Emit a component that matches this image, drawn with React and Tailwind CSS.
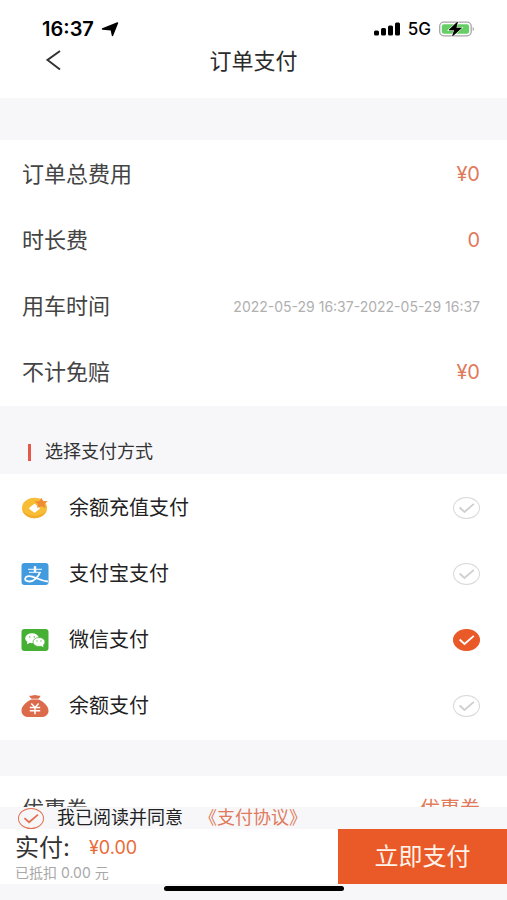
import { useState } from 'react';

const charges = [
  { label: '订单总费用', value: '¥0' },
  { label: '时长费', value: '0' },
  { label: '用车时间', value: '2022-05-29 16:37-2022-05-29 16:37', muted: true },
  { label: '不计免赔', value: '¥0' },
];

function CoinIcon() {
  return (
    <svg viewBox="0 0 28 24" className="h-6 w-7" aria-hidden="true">
      <ellipse cx="13.5" cy="12" rx="12.5" ry="10.2" fill="#f8bd35" />
      <path d="M1.200 13.500c1 5 6.300 8.700 12.300 8.700s11.300-3.700 12.300-8.700c-2.500 4-7 6.200-12.300 6.200S3.700 17.500 1.200 13.500z" fill="#f3ab2b" />
      <path d="M13.500 8.600l4.600 3.700-4.600 3.700-4.600-3.700z" fill="#fff" stroke="#fff" strokeWidth="1.500" strokeLinejoin="round" />
      <path d="M20.300 1.800l1.800 3.100 4.700.300-3.300 2.800 1.200 4-4.400-1.700-4.200 1.600.9-3.800-3.500-2.500 4.900-.600z" fill="#ef8b35" />
    </svg>
  );
}

function AlipayIcon() {
  return (
    <svg viewBox="0 0 28 24" className="h-6 w-7" aria-hidden="true">
      <rect x="0.500" y="1" width="27" height="22" rx="3" fill="#429bdf" />
      <path d="M7 7.300h14M8 10.300h12" stroke="#d5eafa" strokeWidth="1.300" fill="none" />
      <path d="M14 4.200v6" stroke="#fff" strokeWidth="2.400" fill="none" />
      <path d="M19 10.300c-1.400 4-5.500 9.200-10.600 9.200-3.300 0-4.600-1.500-4.200-3.100.5-1.900 3.300-2.700 6.400-1.900 4.300 1 8.900 4.300 16.300 5" stroke="#fff" strokeWidth="1.800" fill="none" />
    </svg>
  );
}

function WechatIcon() {
  return (
    <svg viewBox="0 0 28 24" className="h-6 w-7" aria-hidden="true">
      <rect x="0.500" y="1" width="27" height="22" rx="3" fill="#46b035" />
      <ellipse cx="11" cy="10.300" rx="6.800" ry="5" fill="#fff" />
      <path d="M6.500 13l-.6 3.200 3.600-1.600z" fill="#fff" />
      <ellipse cx="18" cy="14" rx="6" ry="4.500" fill="#fff" stroke="#46b035" strokeWidth="0.700" />
      <path d="M19.500 17.500l3 1.800-.6-3z" fill="#fff" />
      <g fill="#46b035">
        <circle cx="8.800" cy="8.900" r="0.700" />
        <circle cx="13.300" cy="8.900" r="0.700" />
        <circle cx="16" cy="12.900" r="0.600" />
        <circle cx="20" cy="12.900" r="0.600" />
      </g>
    </svg>
  );
}

function MoneyBagIcon() {
  return (
    <svg viewBox="0 0 28 24" className="h-6 w-7" aria-hidden="true">
      <path d="M8.200 1.700c2 .5 3.500-.700 5.800-.700s3.800 1.200 5.400.700c-.2 1.600-1.200 2.300-2.200 3h-6.400c-1.100-.7-2.200-1.500-2.600-3z" fill="#dc6b4c" />
      <path d="M10.500 5.600h7c4.500 1.800 10 6.200 10 11.200 0 4.200-3.300 6.300-7.500 6.300H8c-4.200 0-7.500-2.100-7.500-6.300 0-5 5.500-9.400 10-11.200z" fill="#dc6b4c" />
      <path d="M10.300 9.500l3.700 4 3.700-4M8.800 13.600h10.400M8.800 16.800h10.400M14 13.500v6.700" stroke="#fff" strokeWidth="1.500" fill="none" />
    </svg>
  );
}

const methods = [
  { id: 'recharge', label: '余额充值支付', Icon: CoinIcon },
  { id: 'alipay', label: '支付宝支付', Icon: AlipayIcon },
  { id: 'wechat', label: '微信支付', Icon: WechatIcon },
  { id: 'balance', label: '余额支付', Icon: MoneyBagIcon },
];

function Tick({ className }) {
  return (
    <svg viewBox="0 0 28 24" className={`pointer-events-none col-start-1 row-start-1 h-full w-full ${className}`} aria-hidden="true">
      <path d="M6.500 11.500l5.300 4.800L22 7.500" fill="none" stroke="currentColor" strokeWidth="2" />
    </svg>
  );
}

function StatusBar() {
  return (
    <div className="flex h-[41px] items-end justify-between pr-8 pl-[42px] text-black">
      <div className="flex items-center gap-[7px]">
        <span className="text-[20px] leading-6 font-semibold">16:37</span>
        <svg viewBox="0 0 18 15" className="h-[15px] w-[18px]" aria-hidden="true">
          <path d="M16.500 1L11.500 13.500 10.200 7.700 1.500 7z" fill="currentColor" stroke="currentColor" strokeWidth="1.400" strokeLinejoin="round" />
        </svg>
      </div>
      <div className="flex h-6 items-center gap-2">
        <svg viewBox="0 0 26 14" className="h-[14px] w-[26px]" aria-hidden="true">
          <rect x="0" y="8.500" width="5" height="5" rx="1.500" />
          <rect x="7" y="6" width="5" height="7.500" rx="1.500" />
          <rect x="14" y="3.500" width="5" height="10" rx="1.500" />
          <rect x="21" y="0.500" width="5" height="13" rx="1.500" />
        </svg>
        <span className="text-[17px] leading-6 font-medium">5G</span>
        <svg viewBox="0 0 36 16" className="h-4 w-9" aria-hidden="true">
          <rect x="0.700" y="1.200" width="31.500" height="13.600" rx="4" fill="#fff" stroke="#a6a6a6" strokeWidth="1.300" />
          <rect x="2.800" y="3.200" width="27.300" height="9.600" rx="2.300" fill="#65cf66" />
          <path d="M33.700 5.800c1.700.7 1.700 3.700 0 4.400z" fill="#a6a6a6" />
          <path d="M18.500 1L10 9h5.500L13.500 15 22.500 7H17z" fill="#000" stroke="#fff" strokeWidth="1.600" paintOrder="stroke" />
          <path d="M18.500 1L10 9h5.500L13.500 15 22.500 7H17z" fill="#000" stroke="#000" strokeWidth="0.600" strokeLinejoin="round" />
        </svg>
      </div>
    </div>
  );
}

export default function App() {
  const [method, setMethod] = useState('wechat');
  const [agreed, setAgreed] = useState(true);

  return (
    <div className="flex h-screen flex-col bg-[#f7f7fa] font-[Inter,'Noto_Sans_CJK_SC',sans-serif] text-[#2b2b2b]">
      <header className="h-[98px] shrink-0 bg-white">
        <StatusBar />
        <div className="grid h-10 grid-cols-[1fr_auto_1fr] items-center">
          <button type="button" aria-label="返回" className="ml-[46px] h-6 w-4 justify-self-start text-[#333]">
            <svg viewBox="0 0 16 24" className="h-6 w-4" aria-hidden="true">
              <path d="M14 2L1.500 11 14 20.500" fill="none" stroke="currentColor" strokeWidth="2" />
            </svg>
          </button>
          <h1 className="text-[22px] leading-8">订单支付</h1>
        </div>
      </header>

      <main className="min-h-0 flex-1 overflow-y-auto pt-[42px] [scrollbar-width:none]">
        <dl className="bg-white px-[22px] py-px">
          {charges.map((row) => (
            <div key={row.label} className="flex h-[66px] items-center justify-between pr-[5px]">
              <dt className="text-[22px] leading-8 text-[#444]">{row.label}</dt>
              <dd className={row.muted ? 'text-[14px] text-[#b0b0b0]' : 'text-[20px] text-[#e07a5a]'}>{row.value}</dd>
            </div>
          ))}
        </dl>

        <fieldset>
          <legend className="flex h-[68px] w-full items-center gap-3.5 pt-6 pl-7 text-lg text-[#333]">
            <span className="h-[17px] w-[3px] bg-[#e4584a]" />
            选择支付方式
          </legend>
          <div className="bg-white px-[21px] py-px">
            {methods.map(({ id, label, Icon }) => (
              <label key={id} className="flex h-[66px] items-center pr-1.5">
                <Icon />
                <span className="ml-5 flex-1 text-[20px] leading-8 text-[#222]">{label}</span>
                <span className="grid h-[22px] w-[27px]">
                  <input
                    type="radio"
                    name="method"
                    checked={method === id}
                    onChange={() => setMethod(id)}
                    className="col-start-1 row-start-1 h-full w-full appearance-none rounded-[50%] border border-[#d9d9d9] checked:border-[#ea5a28] checked:bg-[#ea5a28]"
                  />
                  <Tick className={method === id ? 'text-white' : 'text-[#cfcfcf]'} />
                </span>
              </label>
            ))}
          </div>
        </fieldset>

        <div className="mt-9 flex h-[66px] items-center justify-between bg-white pr-[27px] pl-[22px]">
          <span className="text-[22px] leading-8 text-[#444]">优惠券</span>
          <span className="text-[20px] leading-8 text-[#e07a5a]">优惠券</span>
        </div>
      </main>

      <footer className="shrink-0">
        <div className="flex h-[22px] items-center pl-[18px] text-lg leading-[22px]">
          <label className="flex items-center gap-[13px] text-[#222]">
            <span className="grid h-[21px] w-[26px]">
              <input
                type="checkbox"
                checked={agreed}
                onChange={(e) => setAgreed(e.target.checked)}
                className="col-start-1 row-start-1 h-full w-full appearance-none rounded-[50%] border border-[#e2704f]"
              />
              {agreed && <Tick className="text-[#e2704f]" />}
            </span>
            我已阅读并同意
          </label>
          <a href="#agreement" className="ml-4 text-[#e07a5a]">《支付协议》</a>
        </div>
        <div className="grid h-[55px] grid-cols-[2fr_1fr] bg-white">
          <div className="flex flex-col justify-center pl-[15px]">
            <div className="flex items-center gap-[19px]">
              <span className="text-[24px] leading-8 text-[#333]">实付:</span>
              <span className="text-[18px] leading-8 text-[#ea6a35]">¥0.00</span>
            </div>
            <p className="text-[14px] leading-[18px] text-[#a8a8a8]">已抵扣 0.00 元</p>
          </div>
          <button type="button" className="bg-[#ea5a28] text-[24px] text-[#fff3ea]">立即支付</button>
        </div>
        <div className="flex h-4 justify-center pt-0.5">
          <span className="h-[5px] w-[180px] rounded-full bg-black" />
        </div>
      </footer>
    </div>
  );
}
